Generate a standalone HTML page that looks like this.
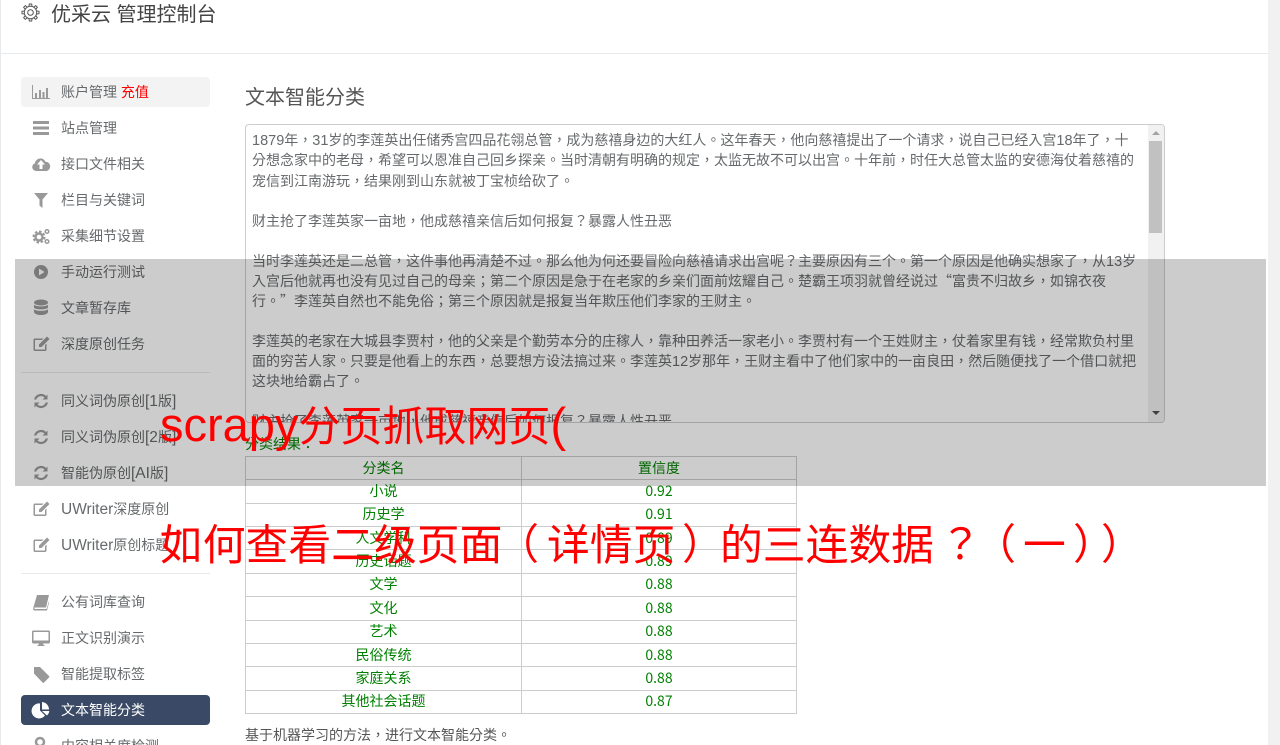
<!DOCTYPE html>
<html lang="zh-CN"><head><meta charset="utf-8"><title>优采云 管理控制台</title>
<style>
html,body{margin:0;padding:0;width:1280px;height:745px;overflow:hidden;background:#fff}
body{position:relative;font-family:"Liberation Sans","Noto Sans CJK SC",sans-serif;font-size:14px;color:#676a6c}
.a{position:absolute;white-space:nowrap}
.m{position:absolute;left:61px;line-height:20px;white-space:nowrap;color:#676a6c}
.i{position:absolute;left:30px;width:22px;height:20px;fill:#999;stroke:none}
.d{position:absolute;left:21px;width:189px;height:1px;background:#e7eaec}
.l{font-size:15.5px}
.n{font-size:14.5px}
.q{font-family:"Noto Sans CJK TC",sans-serif}
#ta{position:absolute;left:245px;top:124px;width:918px;height:297px;border:1px solid #ccc;border-radius:4px;overflow:hidden;background:#fff;box-sizing:content-box;font-family:"Liberation Sans","Noto Sans CJK TC",sans-serif;text-spacing-trim:space-all}
#ta div{position:absolute;left:6px;white-space:nowrap;line-height:20px;color:#676a6c}
table{position:absolute;left:245px;top:456px;width:551px;border-collapse:collapse;table-layout:fixed;color:green;font-family:"Noto Sans CJK SC",sans-serif}
td{border:1px solid #ccc;padding:0;text-align:center;height:22.36px;line-height:21px;font-size:14px}
.t{position:absolute;color:red;font-size:42px;line-height:50px;white-space:nowrap;left:160px;font-family:"Liberation Sans","Noto Sans CJK TC",sans-serif}
.u{position:absolute;top:517px;color:red;font-size:42.8px;line-height:50px;white-space:nowrap;font-family:"Noto Sans CJK TC",sans-serif;text-spacing-trim:space-all}
.u2{font-size:42px}
</style></head><body>
<div class="a" style="left:0;top:0;width:1px;height:745px;background:#e7eaec"></div>
<div class="a" style="left:1268px;top:0;width:12px;height:745px;background:#f1f1f1"></div>
<div class="a" style="left:1px;top:53px;width:1267px;height:1px;background:#e7eaec"></div>
<svg class="a" style="left:21px;top:3px" width="19" height="19" viewBox="0 0 19 19"><g fill="none" stroke="#555" stroke-width="1"><circle cx="9.5" cy="9.500" r="2.800"/><circle cx="9.5" cy="9.500" r="6.200"/><g><path d="M8 3.400L8.300 1h2.400l.3 2.400"/><path d="M8 3.400L8.300 1h2.400l.3 2.400" transform="rotate(45 9.500 9.500)"/><path d="M8 3.400L8.300 1h2.400l.3 2.400" transform="rotate(90 9.500 9.500)"/><path d="M8 3.400L8.300 1h2.400l.3 2.400" transform="rotate(135 9.500 9.500)"/><path d="M8 3.400L8.300 1h2.400l.3 2.400" transform="rotate(180 9.500 9.500)"/><path d="M8 3.400L8.300 1h2.400l.3 2.400" transform="rotate(225 9.500 9.500)"/><path d="M8 3.400L8.300 1h2.400l.3 2.400" transform="rotate(270 9.500 9.500)"/><path d="M8 3.400L8.300 1h2.400l.3 2.400" transform="rotate(315 9.500 9.500)"/></g></g></svg>
<div class="a" style="left:51px;top:0;font-size:20px;line-height:28px;color:#444;margin-top:1px">优采云 管理控制台</div>

<div class="a" style="left:21px;top:77px;width:189px;height:30px;background:#f3f3f4;border-radius:4px"></div>
<div class="a" style="left:21px;top:695px;width:189px;height:30px;background:#3a4a66;border-radius:4px"></div>

<svg class="i" style="top:82px" viewBox="0 0 22 20"><path d="M2 3h1v13h17v1H2z"/><path d="M5 11h2v5H5zM9 8h2v8H9zM12.500 10h2v6h-2zM16 6h2v10h-2z"/></svg>
<div class="m" style="top:82px">账户管理 <span style="color:red">充值</span></div>
<svg class="i" style="top:118px" viewBox="0 0 22 20"><path d="M3 3h16v3H3zM3 8.500h16v3H3zM3 14h16v3H3z"/></svg>
<div class="m" style="top:118px">站点管理</div>
<svg class="i" style="top:154px" viewBox="0 0 22 20"><path d="M6 17a4 4 0 0 1-1-7.800 5.500 5.500 0 0 1 10.500-1.500 4.700 4.700 0 0 1 1 9.300zM11 6l-4 4.500h2.500V15h3v-4.500H15z" fill-rule="evenodd"/></svg>
<div class="m" style="top:154px">接口文件相关</div>
<svg class="i" style="top:190px" viewBox="0 0 22 20"><path d="M4 3h14l-5.500 6.500V18l-3-2.500v-6z"/></svg>
<div class="m" style="top:190px">栏目与关键词</div>
<svg class="i" style="top:226px" viewBox="0 0 22 20"><circle cx="9" cy="11" r="3.500" fill="none" stroke="#999" stroke-width="2.400"/><circle cx="9" cy="11" r="5.500" fill="none" stroke="#999" stroke-width="2" stroke-dasharray="2.500 1.800"/><circle cx="17" cy="5.500" r="1.800" fill="none" stroke="#999" stroke-width="1.500"/><circle cx="17" cy="15.500" r="1.800" fill="none" stroke="#999" stroke-width="1.500"/></svg>
<div class="m" style="top:226px">采集细节设置</div>
<svg class="i" style="top:262px" viewBox="0 0 22 20"><path d="M11 3a7 7 0 1 1 0 14 7 7 0 0 1 0-14zM9 6.500v7l5.500-3.500z" fill-rule="evenodd"/></svg>
<div class="m" style="top:262px">手动运行测试</div>
<svg class="i" style="top:298px" viewBox="0 0 22 20"><ellipse cx="11" cy="4.500" rx="7" ry="3"/><path d="M4 6.500c1 2.500 13 2.500 14 0v3c-1 2.500-13 2.500-14 0zM4 11c1 2.500 13 2.500 14 0v3c-1 4-13 4-14 0z"/></svg>
<div class="m" style="top:298px">文章暂存库</div>
<svg class="i" style="top:334px" viewBox="0 0 22 20"><path d="M15 11v4.500H5V6h7l1.500-1.500H5A1.500 1.500 0 0 0 3.500 6v9.500A1.500 1.500 0 0 0 5 17h10a1.500 1.500 0 0 0 1.500-1.500v-6zM9 10.500V13h2.500l8-8L17 2.500z"/></svg>
<div class="m" style="top:334px">深度原创任务</div>
<div class="d" style="top:372px"></div>
<svg class="i" style="top:391px" viewBox="0 0 22 20"><path d="M17.500 3.500v5h-5l2-2A5 5 0 0 0 6.300 8.500H4A7.200 7.200 0 0 1 16 5zM4.500 16.500v-5h5l-2 2a5 5 0 0 0 8.200-2H18A7.200 7.200 0 0 1 6 15z"/></svg>
<div class="m" style="top:391px">同义词伪原创<span class="l">[1</span>版<span class="l">]</span></div>
<svg class="i" style="top:427px" viewBox="0 0 22 20"><path d="M17.500 3.500v5h-5l2-2A5 5 0 0 0 6.300 8.500H4A7.200 7.200 0 0 1 16 5zM4.500 16.500v-5h5l-2 2a5 5 0 0 0 8.200-2H18A7.200 7.200 0 0 1 6 15z"/></svg>
<div class="m" style="top:427px">同义词伪原创<span class="l">[2</span>版<span class="l">]</span></div>
<svg class="i" style="top:463px" viewBox="0 0 22 20"><path d="M17.500 3.500v5h-5l2-2A5 5 0 0 0 6.300 8.500H4A7.200 7.200 0 0 1 16 5zM4.500 16.500v-5h5l-2 2a5 5 0 0 0 8.200-2H18A7.200 7.200 0 0 1 6 15z"/></svg>
<div class="m" style="top:463px">智能伪原创<span class="l">[AI</span>版<span class="l">]</span></div>
<svg class="i" style="top:499px" viewBox="0 0 22 20"><path d="M15 11v4.500H5V6h7l1.500-1.500H5A1.500 1.500 0 0 0 3.500 6v9.500A1.500 1.500 0 0 0 5 17h10a1.500 1.500 0 0 0 1.500-1.500v-6zM9 10.500V13h2.500l8-8L17 2.500z"/></svg>
<div class="m" style="top:499px"><span class="l">UWriter</span>深度原创</div>
<svg class="i" style="top:535px" viewBox="0 0 22 20"><path d="M15 11v4.500H5V6h7l1.500-1.500H5A1.500 1.500 0 0 0 3.500 6v9.500A1.500 1.500 0 0 0 5 17h10a1.500 1.500 0 0 0 1.500-1.500v-6zM9 10.500V13h2.500l8-8L17 2.500z"/></svg>
<div class="m" style="top:535px"><span class="l">UWriter</span>原创标题</div>
<div class="d" style="top:573px"></div>
<svg class="i" style="top:592px" viewBox="0 0 22 20"><path d="M7 3h12l-3 12.500H5c-1 0-1 1.500 0 1.500h11.500l.5-1 1.500-6 .5.500-2 8H4.500C3 18.500 3 16.500 3.500 15z"/></svg>
<div class="m" style="top:592px">公有词库查询</div>
<svg class="i" style="top:628px" viewBox="0 0 22 20"><path d="M3.500 2.500h15A1.500 1.500 0 0 1 20 4v10a1.500 1.500 0 0 1-1.500 1.500H13l.5 1.500h1v1h-7v-1h1l.5-1.500H3.500A1.500 1.500 0 0 1 2 14V4a1.500 1.500 0 0 1 1.500-1.500zm0 1.500v8.500h15V4z" fill-rule="evenodd"/></svg>
<div class="m" style="top:628px">正文识别演示</div>
<svg class="i" style="top:664px" viewBox="0 0 22 20"><path d="M4 3h6l9 9a1 1 0 0 1 0 1.500l-5 5a1 1 0 0 1-1.500 0L4 9.500z"/></svg>
<div class="m" style="top:664px">智能提取标签</div>
<svg class="i" style="top:700px;fill:#fff" viewBox="0 0 22 20"><path d="M10 3.500V10.500l5 5A7.500 7.500 0 1 1 10 3.500zM12 2a7.500 7.500 0 0 1 7 7.500h-7zM12 11h7.300a7.500 7.500 0 0 1-2.300 4.500z"/></svg>
<div class="m" style="top:700px;color:#fff">文本智能分类</div>
<svg class="i" style="top:736px" viewBox="0 0 22 20"><circle cx="10" cy="6" r="4" fill="none" stroke="#999" stroke-width="2.500"/></svg>
<div class="m" style="top:736px">内容相关度检测</div>

<div class="a" style="left:245px;top:84px;font-size:20px;line-height:28px;color:#555">文本智能分类</div>
<div id="ta" lang="zh-TW">
<div style="top:5px"><span class="n">1879</span>年，<span class="n">31</span>岁的李莲英出任储秀宫四品花翎总管，成为慈禧身边的大红人。这年春天，他向慈禧提出了一个请求，说自己已经入宫<span class="n">18</span>年了，十</div>
<div style="top:25px">分想念家中的老母，希望可以恩准自己回乡探亲。当时清朝有明确的规定，太监无故不可以出宫。十年前，时任大总管太监的安德海仗着慈禧的</div>
<div style="top:46px">宠信到江南游玩，结果刚到山东就被丁宝桢给砍了。</div>
<div style="top:86px">财主抢了李莲英家一亩地，他成慈禧亲信后如何报复？暴露人性丑恶</div>
<div style="top:126px">当时李莲英还是二总管，这件事他再清楚不过。那么他为何还要冒险向慈禧请求出宫呢？主要原因有三个。第一个原因是他确实想家了，从<span class="n">13</span>岁</div>
<div style="top:146px">入宫后他就再也没有见过自己的母亲；第二个原因是急于在老家的乡亲们面前炫耀自己。楚霸王项羽就曾经说过<span class="q">“</span>富贵不归故乡，如锦衣夜</div>
<div style="top:166px">行。<span class="q">”</span>李莲英自然也不能免俗；第三个原因就是报复当年欺压他们李家的王财主。</div>
<div style="top:206px">李莲英的老家在大城县李贾村，他的父亲是个勤劳本分的庄稼人，靠种田养活一家老小。李贾村有一个王姓财主，仗着家里有钱，经常欺负村里</div>
<div style="top:226px">面的穷苦人家。只要是他看上的东西，总要想方设法搞过来。李莲英<span class="n">12</span>岁那年，王财主看中了他们家中的一亩良田，然后随便找了一个借口就把</div>
<div style="top:246px">这块地给霸占了。</div>
<div style="top:286px">财主抢了李莲英家一亩地，他成慈禧亲信后如何报复？暴露人性丑恶</div>
<span style="position:absolute;left:902px;top:0;width:16px;height:297px;background:#f1f1f1"></span>
<span style="position:absolute;left:903px;top:16px;width:13px;height:92px;background:#c1c1c1"></span>
<span style="position:absolute;left:906px;top:6px;width:0;height:0;border:4px solid transparent;border-top:0;border-bottom:4px solid #a3a3a3"></span>
<span style="position:absolute;left:906px;top:286px;width:0;height:0;border:4px solid transparent;border-bottom:0;border-top:4px solid #505050"></span>
</div>
<div class="a" lang="zh-TW" style="left:245px;top:434px;line-height:20px;color:green;font-family:'Liberation Sans','Noto Sans CJK TC',sans-serif">分类结果：</div>
<table><colgroup><col style="width:276px"><col style="width:275px"></colgroup>
<tr><td>分类名</td><td>置信度</td></tr>
<tr><td>小说</td><td>0.92</td></tr>
<tr><td>历史学</td><td>0.91</td></tr>
<tr><td>人文学科</td><td>0.89</td></tr>
<tr><td>历史话题</td><td>0.89</td></tr>
<tr><td>文学</td><td>0.88</td></tr>
<tr><td>文化</td><td>0.88</td></tr>
<tr><td>艺术</td><td>0.88</td></tr>
<tr><td>民俗传统</td><td>0.88</td></tr>
<tr><td>家庭关系</td><td>0.88</td></tr>
<tr><td>其他社会话题</td><td>0.87</td></tr>
</table>
<div class="a" lang="zh-TW" style="left:245px;top:725px;line-height:20px;color:#555;font-family:'Liberation Sans','Noto Sans CJK TC',sans-serif">基于机器学习的方法，进行文本智能分类。</div>

<div class="a" style="left:15px;top:259px;width:1251px;height:227px;background:rgba(0,0,0,.2)"></div>
<div class="t" style="top:400px"><span style="font-size:47px">scrapy</span>分页抓取网页<span style="font-size:47px">(</span></div>
<div lang="zh-TW">
<span class="u" style="left:160px">如何查看二级页面</span>
<span class="u u2" style="left:497px">（</span>
<span class="u" style="left:547px">详情页</span>
<span class="u u2" style="left:682px">）</span>
<span class="u" style="left:720px">的三连数据</span>
<span class="u u2" style="left:939.5px">？</span>
<span class="u u2" style="left:974px">（</span>
<span class="u" style="left:1023px">一</span>
<span class="u u2" style="left:1073px">）</span>
<span class="u u2" style="left:1101px">）</span>
</div>
</body></html>
